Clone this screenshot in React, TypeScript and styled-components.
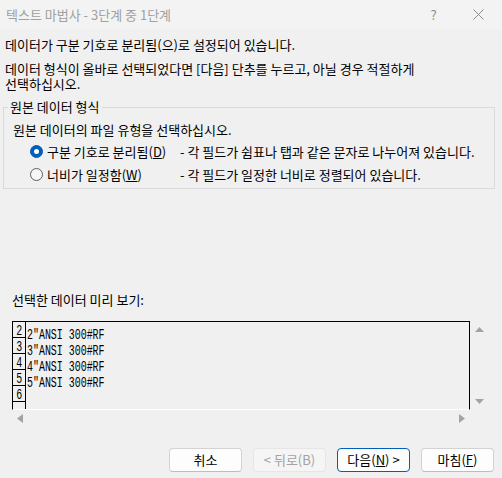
import styled, { createGlobalStyle } from 'styled-components'

const GlobalStyle = createGlobalStyle`
  html, body {
    margin: 0;
    padding: 0;
    background: #f0f0f0;
  }
  body {
    font-family: 'Noto Sans CJK KR', 'Noto Sans', sans-serif;
    font-size: 13px;
    color: #000;
  }
`

const Window = styled.div`
  width: 502px;
  height: 478px;
  background: #f0f0f0;
  display: flex;
  flex-direction: column;
  overflow: hidden;
`

const TitleBar = styled.div`
  height: 29px;
  display: flex;
  align-items: center;
  padding-left: 6px;
  padding-right: 1px;
  background: #f3f3f3;
  color: #a0a0a0;
`

const TitleText = styled.div`
  flex: 1;
  line-height: 15px;
`

const TitleButton = styled.div`
  width: 45px;
  height: 29px;
  display: flex;
  align-items: center;
  justify-content: center;
  color: #8c8c8c;
  font-size: 13px;
`

const Para = styled.div<{ $top: number; $lh?: number }>`
  margin: ${({ $top }) => $top}px 0 0 5px;
  line-height: ${({ $lh }) => $lh || 14}px;
`

const Group = styled.fieldset`
  margin: 9px 7px 0 3px;
  padding: 0 0 2px 0;
  min-width: 0;
  border: 1px solid #dadada;
`

const Legend = styled.legend`
  margin-left: 4px;
  padding: 0 2px;
  line-height: 14px;
`

const GroupBody = styled.div`
  padding-left: 9px;
`

const Instruction = styled.div`
  margin-top: 9px;
  margin-bottom: 3px;
  line-height: 14px;
`

const OptionRow = styled.div`
  height: 23px;
  display: flex;
  align-items: center;
  margin-left: 17px;
`

const Radio = styled.span<{ $checked?: boolean }>`
  width: 13px;
  height: 13px;
  box-sizing: border-box;
  border-radius: 50%;
  flex: none;
  display: flex;
  align-items: center;
  justify-content: center;
  background: ${({ $checked }) => ($checked ? '#005fb8' : '#f6f6f6')};
  border: 1px solid ${({ $checked }) => ($checked ? '#005fb8' : '#5e5e5e')};
  &::after {
    content: '';
    display: ${({ $checked }) => ($checked ? 'block' : 'none')};
    width: 5px;
    height: 5px;
    border-radius: 50%;
    background: #fff;
  }
`

const OptionLabel = styled.span`
  width: 133px;
  margin-left: 4px;
  line-height: 14px;
  flex: none;
`

const OptionDesc = styled.span`
  line-height: 14px;
  white-space: nowrap;
`

const PreviewLabel = styled.div`
  margin: 104px 0 0 12px;
  line-height: 14px;
`

const PreviewArea = styled.div`
  margin: 14px 0 0 12px;
  display: grid;
  grid-template-columns: 458px 18px;
  grid-template-rows: 89px 17px;
`

const PreviewBox = styled.div`
  box-sizing: border-box;
  border: 1px solid #000;
  border-bottom-color: #fff;
  overflow: hidden;
`

const DataRow = styled.div`
  display: flex;
  height: 16px;
`

const NumCell = styled.div`
  width: 13px;
  height: 16px;
  box-sizing: border-box;
  border-right: 1px solid #000;
  border-bottom: 1px solid #000;
  display: flex;
  justify-content: center;
  padding-top: 2px;
  flex: none;
`

const Mono = styled.span<{ $origin?: string }>`
  display: inline-block;
  font-family: 'Liberation Mono', 'DejaVu Sans Mono', monospace;
  font-size: 14px;
  line-height: 14px;
  white-space: pre;
  transform: scaleX(0.71);
  transform-origin: ${({ $origin }) => $origin || 'left'} center;
`

const DataText = styled.div`
  padding: 2px 0 0 1px;
  height: 16px;
  box-sizing: border-box;
`

const VScroll = styled.div`
  display: flex;
  flex-direction: column;
  align-items: center;
  justify-content: space-between;
  padding: 6px 0 6px 0;
`

const HScroll = styled.div`
  display: flex;
  align-items: center;
  justify-content: space-between;
  padding: 0 5px;
`

const ButtonRow = styled.div`
  margin-top: 21px;
  display: flex;
  justify-content: flex-end;
  gap: 11px;
  padding-right: 8px;
`

const Button = styled.button<{ $variant?: 'default' | 'disabled' }>`
  width: 73px;
  height: 24px;
  box-sizing: border-box;
  border-radius: 4px;
  font-family: inherit;
  font-size: 13px;
  padding: 0;
  line-height: 14px;
  background: ${({ $variant }) => ($variant === 'disabled' ? '#f5f5f5' : '#fdfdfd')};
  color: ${({ $variant }) => ($variant === 'disabled' ? '#a2a2a2' : '#000')};
  border: 1px solid
    ${({ $variant }) =>
      $variant === 'default' ? '#005fb8' : $variant === 'disabled' ? '#e6e6e6' : '#d2d2d2'};
  ${({ $variant }) => $variant !== 'disabled' && $variant !== 'default' && 'border-bottom-color: #bdbdbd;'}
`

const Arrow = ({ dir }: { dir: 'up' | 'down' | 'left' | 'right' }) => {
  const horizontal = dir === 'left' || dir === 'right'
  const w = horizontal ? 6 : 9
  const h = horizontal ? 9 : 5
  const points = {
    up: '0,5 4.5,0 9,5',
    down: '0,0 9,0 4.5,5',
    left: '6,0 6,9 0,4.5',
    right: '0,0 6,4.5 0,9',
  }[dir]
  return (
    <svg width={w} height={h} viewBox={`0 0 ${w} ${h}`}>
      <polygon points={points} fill="#a3a3a3" />
    </svg>
  )
}

// the 7th row is only partly visible, so its number is left out
const rows = [
  { n: '2', text: '2"ANSI 300#RF' },
  { n: '3', text: '3"ANSI 300#RF' },
  { n: '4', text: '4"ANSI 300#RF' },
  { n: '5', text: '5"ANSI 300#RF' },
  { n: '6', text: '' },
  { n: '', text: '' },
]

const App = () => {
  return (
    <>
      <GlobalStyle />
      <Window>
        <TitleBar>
          <TitleText>텍스트 마법사 - 3단계 중 1단계</TitleText>
          <TitleButton>?</TitleButton>
          <TitleButton>
            <svg width="11" height="11" viewBox="0 0 11 11">
              <path d="M0.5 0.5 L10.5 10.5 M10.5 0.5 L0.5 10.5" stroke="#8c8c8c" strokeWidth="1" />
            </svg>
          </TitleButton>
        </TitleBar>

        <Para $top={9}>데이터가 구분 기호로 분리됨(으)로 설정되어 있습니다.</Para>
        <Para $top={9} $lh={15}>
          데이터 형식이 올바로 선택되었다면 [다음] 단추를 누르고, 아닐 경우 적절하게
          <br />
          선택하십시오.
        </Para>

        <Group>
          <Legend>원본 데이터 형식</Legend>
          <GroupBody>
            <Instruction>원본 데이터의 파일 유형을 선택하십시오.</Instruction>
            <OptionRow>
              <Radio $checked />
              <OptionLabel>
                구분 기호로 분리됨(<u>D</u>)
              </OptionLabel>
              <OptionDesc>- 각 필드가 쉼표나 탭과 같은 문자로 나누어져 있습니다.</OptionDesc>
            </OptionRow>
            <OptionRow>
              <Radio />
              <OptionLabel>
                너비가 일정함(<u>W</u>)
              </OptionLabel>
              <OptionDesc>- 각 필드가 일정한 너비로 정렬되어 있습니다.</OptionDesc>
            </OptionRow>
          </GroupBody>
        </Group>

        <PreviewLabel>선택한 데이터 미리 보기:</PreviewLabel>

        <PreviewArea>
          <PreviewBox>
            {rows.map((r, i) => (
              <DataRow key={i}>
                <NumCell>
                  <Mono $origin="center">{r.n}</Mono>
                </NumCell>
                <DataText>
                  <Mono>{r.text}</Mono>
                </DataText>
              </DataRow>
            ))}
          </PreviewBox>
          <VScroll>
            <Arrow dir="up" />
            <Arrow dir="down" />
          </VScroll>
          <HScroll>
            <Arrow dir="left" />
            <Arrow dir="right" />
          </HScroll>
        </PreviewArea>

        <ButtonRow>
          <Button>취소</Button>
          <Button $variant="disabled">&lt; 뒤로(B)</Button>
          <Button $variant="default">
            다음(<u>N</u>) &gt;
          </Button>
          <Button>
            마침(<u>F</u>)
          </Button>
        </ButtonRow>
      </Window>
    </>
  )
}

export default App
